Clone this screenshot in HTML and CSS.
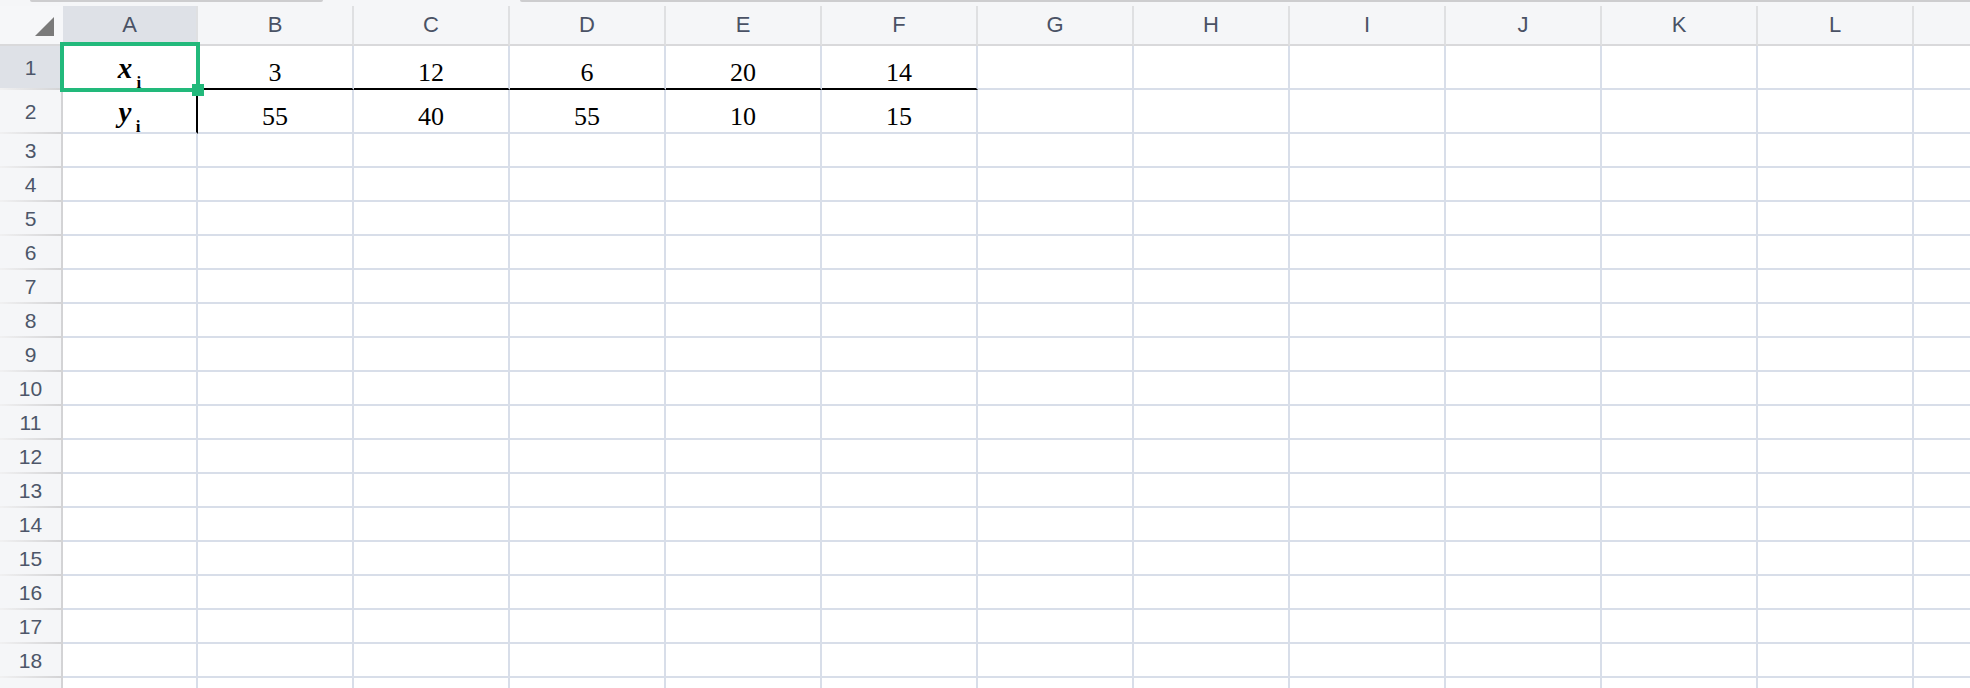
FILE: index.html
```html
<!DOCTYPE html>
<html lang="en">
<head>
<meta charset="utf-8">
<title>Sheet</title>
<link rel="stylesheet" href="styles.css">
</head>
<body>
<div class="topbar"><span class="track track-a"></span><span class="track track-b"></span></div>
<div class="viewport">
  <div class="sheet">
    <div class="corner"><span class="tri"></span></div>
    <div class="ch active">A</div><div class="ch">B</div><div class="ch">C</div><div class="ch">D</div><div class="ch">E</div><div class="ch">F</div><div class="ch">G</div><div class="ch">H</div><div class="ch">I</div><div class="ch">J</div><div class="ch">K</div><div class="ch">L</div><div class="ch"></div>

    <div class="rh active">1</div>
    <div class="c lbl"><span class="var">x</span><span class="sub"> i</span></div>
    <div class="c num bb">3</div><div class="c num bb">12</div><div class="c num bb">6</div><div class="c num bb">20</div><div class="c num bb">14</div>
    <div class="c"></div><div class="c"></div><div class="c"></div><div class="c"></div><div class="c"></div><div class="c"></div><div class="c"></div>

    <div class="rh">2</div>
    <div class="c lbl br"><span class="var">y</span><span class="sub"> i</span></div>
    <div class="c num">55</div><div class="c num">40</div><div class="c num">55</div><div class="c num">10</div><div class="c num">15</div>
    <div class="c"></div><div class="c"></div><div class="c"></div><div class="c"></div><div class="c"></div><div class="c"></div><div class="c"></div>

    <div class="rh">3</div><div class="c"></div><div class="c"></div><div class="c"></div><div class="c"></div><div class="c"></div><div class="c"></div><div class="c"></div><div class="c"></div><div class="c"></div><div class="c"></div><div class="c"></div><div class="c"></div><div class="c"></div>
    <div class="rh">4</div><div class="c"></div><div class="c"></div><div class="c"></div><div class="c"></div><div class="c"></div><div class="c"></div><div class="c"></div><div class="c"></div><div class="c"></div><div class="c"></div><div class="c"></div><div class="c"></div><div class="c"></div>
    <div class="rh">5</div><div class="c"></div><div class="c"></div><div class="c"></div><div class="c"></div><div class="c"></div><div class="c"></div><div class="c"></div><div class="c"></div><div class="c"></div><div class="c"></div><div class="c"></div><div class="c"></div><div class="c"></div>
    <div class="rh">6</div><div class="c"></div><div class="c"></div><div class="c"></div><div class="c"></div><div class="c"></div><div class="c"></div><div class="c"></div><div class="c"></div><div class="c"></div><div class="c"></div><div class="c"></div><div class="c"></div><div class="c"></div>
    <div class="rh">7</div><div class="c"></div><div class="c"></div><div class="c"></div><div class="c"></div><div class="c"></div><div class="c"></div><div class="c"></div><div class="c"></div><div class="c"></div><div class="c"></div><div class="c"></div><div class="c"></div><div class="c"></div>
    <div class="rh">8</div><div class="c"></div><div class="c"></div><div class="c"></div><div class="c"></div><div class="c"></div><div class="c"></div><div class="c"></div><div class="c"></div><div class="c"></div><div class="c"></div><div class="c"></div><div class="c"></div><div class="c"></div>
    <div class="rh">9</div><div class="c"></div><div class="c"></div><div class="c"></div><div class="c"></div><div class="c"></div><div class="c"></div><div class="c"></div><div class="c"></div><div class="c"></div><div class="c"></div><div class="c"></div><div class="c"></div><div class="c"></div>
    <div class="rh">10</div><div class="c"></div><div class="c"></div><div class="c"></div><div class="c"></div><div class="c"></div><div class="c"></div><div class="c"></div><div class="c"></div><div class="c"></div><div class="c"></div><div class="c"></div><div class="c"></div><div class="c"></div>
    <div class="rh">11</div><div class="c"></div><div class="c"></div><div class="c"></div><div class="c"></div><div class="c"></div><div class="c"></div><div class="c"></div><div class="c"></div><div class="c"></div><div class="c"></div><div class="c"></div><div class="c"></div><div class="c"></div>
    <div class="rh">12</div><div class="c"></div><div class="c"></div><div class="c"></div><div class="c"></div><div class="c"></div><div class="c"></div><div class="c"></div><div class="c"></div><div class="c"></div><div class="c"></div><div class="c"></div><div class="c"></div><div class="c"></div>
    <div class="rh">13</div><div class="c"></div><div class="c"></div><div class="c"></div><div class="c"></div><div class="c"></div><div class="c"></div><div class="c"></div><div class="c"></div><div class="c"></div><div class="c"></div><div class="c"></div><div class="c"></div><div class="c"></div>
    <div class="rh">14</div><div class="c"></div><div class="c"></div><div class="c"></div><div class="c"></div><div class="c"></div><div class="c"></div><div class="c"></div><div class="c"></div><div class="c"></div><div class="c"></div><div class="c"></div><div class="c"></div><div class="c"></div>
    <div class="rh">15</div><div class="c"></div><div class="c"></div><div class="c"></div><div class="c"></div><div class="c"></div><div class="c"></div><div class="c"></div><div class="c"></div><div class="c"></div><div class="c"></div><div class="c"></div><div class="c"></div><div class="c"></div>
    <div class="rh">16</div><div class="c"></div><div class="c"></div><div class="c"></div><div class="c"></div><div class="c"></div><div class="c"></div><div class="c"></div><div class="c"></div><div class="c"></div><div class="c"></div><div class="c"></div><div class="c"></div><div class="c"></div>
    <div class="rh">17</div><div class="c"></div><div class="c"></div><div class="c"></div><div class="c"></div><div class="c"></div><div class="c"></div><div class="c"></div><div class="c"></div><div class="c"></div><div class="c"></div><div class="c"></div><div class="c"></div><div class="c"></div>
    <div class="rh">18</div><div class="c"></div><div class="c"></div><div class="c"></div><div class="c"></div><div class="c"></div><div class="c"></div><div class="c"></div><div class="c"></div><div class="c"></div><div class="c"></div><div class="c"></div><div class="c"></div><div class="c"></div>
    <div class="rh">19</div><div class="c"></div><div class="c"></div><div class="c"></div><div class="c"></div><div class="c"></div><div class="c"></div><div class="c"></div><div class="c"></div><div class="c"></div><div class="c"></div><div class="c"></div><div class="c"></div><div class="c"></div>
  </div>
  <div class="sel"></div>
  <div class="handle"></div>
</div>
</body>
</html>
```

FILE: styles.css
```css
* { box-sizing: border-box; }

html, body {
  margin: 0;
  padding: 0;
  width: 1970px;
  height: 688px;
  overflow: hidden;
  background: #ffffff;
}

.topbar {
  height: 6px;
  background: #f5f6f8;
  display: flex;
  align-items: flex-start;
}

.track {
  height: 2px;
  background: #cdcdcf;
}

.track-a {
  margin-left: 30px;
  width: 293px;
  border-radius: 0 0 3px 3px;
}

.track-b {
  margin-left: 197px;
  flex: 1;
  border-radius: 0 0 0 3px;
}

.viewport {
  position: relative;
  width: 1970px;
  height: 682px;
  overflow: hidden;
}

.sheet {
  display: grid;
  grid-template-columns: 63px 135px repeat(12, 156px);
  grid-template-rows: 40px 44px 44px;
  grid-auto-rows: 34px;
  width: 2070px;
}

.corner {
  position: relative;
  background: #f6f7f9;
  border-bottom: 2px solid #d9d9db;
}

.tri {
  position: absolute;
  left: 35px;
  top: 11px;
  width: 0;
  height: 0;
  border-style: solid;
  border-width: 0 0 19px 19px;
  border-color: transparent transparent #7a7a7a transparent;
}

.ch {
  background: #f5f6f8;
  border-right: 2px solid #dfe0e2;
  border-bottom: 2px solid #d9d9db;
  display: flex;
  align-items: center;
  justify-content: center;
  font-family: "Liberation Sans", Arial, sans-serif;
  font-size: 22px;
  color: #4a5265;
}

.ch.active {
  background: #dee1e7;
}

.rh {
  background: #f5f6f8;
  border-right: 2px solid;
  border-bottom: 2px solid;
  border-image: linear-gradient(to right, #f1f1f2, #d3d3d5) 1;
  display: flex;
  align-items: center;
  justify-content: center;
  padding-top: 1px;
  font-family: "Liberation Sans", Arial, sans-serif;
  font-size: 21px;
  color: #4d5669;
}

.rh.active {
  background: #dee1e7;
}

.c {
  border-right: 2px solid #d8dee9;
  border-bottom: 2px solid #d8dee9;
  background: #ffffff;
}

.num {
  display: flex;
  align-items: flex-end;
  justify-content: center;
  padding-bottom: 2px;
  font-family: "Liberation Serif", "Times New Roman", serif;
  font-size: 26px;
  line-height: 26px;
  color: #000000;
}

.lbl {
  display: flex;
  align-items: flex-end;
  justify-content: center;
  padding-bottom: 5px;
  font-family: "Liberation Serif", "Times New Roman", serif;
  font-size: 29px;
  line-height: 29px;
  color: #000000;
}

.var {
  font-weight: bold;
  font-style: italic;
}

.sub {
  font-weight: bold;
  font-size: 17px;
  line-height: 0;
  vertical-align: -5px;
  white-space: pre;
}

.bb { border-bottom-color: #000000; }
.br { border-right-color: #000000; }

.sel {
  position: absolute;
  left: 60px;
  top: 36px;
  width: 140px;
  height: 50px;
  border: 4px solid #22b97b;
}

.handle {
  position: absolute;
  left: 192px;
  top: 78px;
  width: 12px;
  height: 12px;
  background: #22b97b;
}
```
